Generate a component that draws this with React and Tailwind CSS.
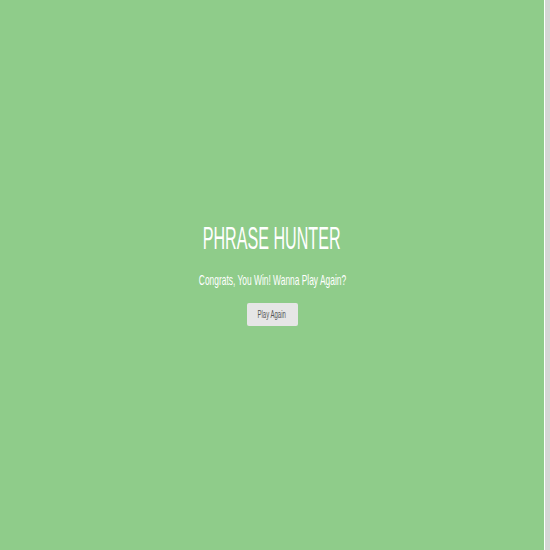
export default function App() {
  return (
    <div className="flex h-[550px] w-[550px] overflow-hidden">
      <div className="flex flex-1 flex-col items-center justify-center bg-[#8fcc8a] pb-[3px] text-white" style={{ fontFamily: '"Liberation Sans", Arial, sans-serif' }}>
        <h1 className="scale-x-[0.52] whitespace-nowrap text-[31px] leading-[34px] font-normal">PHRASE HUNTER</h1>
        <p className="mt-[15px] scale-x-[0.56] whitespace-nowrap text-[15px] leading-[18px]">Congrats, You Win! Wanna Play Again?</p>
        <button className="mt-[14px] flex h-[23px] w-[51px] items-center justify-center rounded-[2px] bg-[#e6e6e6] text-[10px] text-[#555]">
          <span className="scale-x-[0.6] whitespace-nowrap">Play Again</span>
        </button>
      </div>
      <div className="w-[6px] border-l border-white bg-[#d6d6d6]" />
    </div>
  );
}
